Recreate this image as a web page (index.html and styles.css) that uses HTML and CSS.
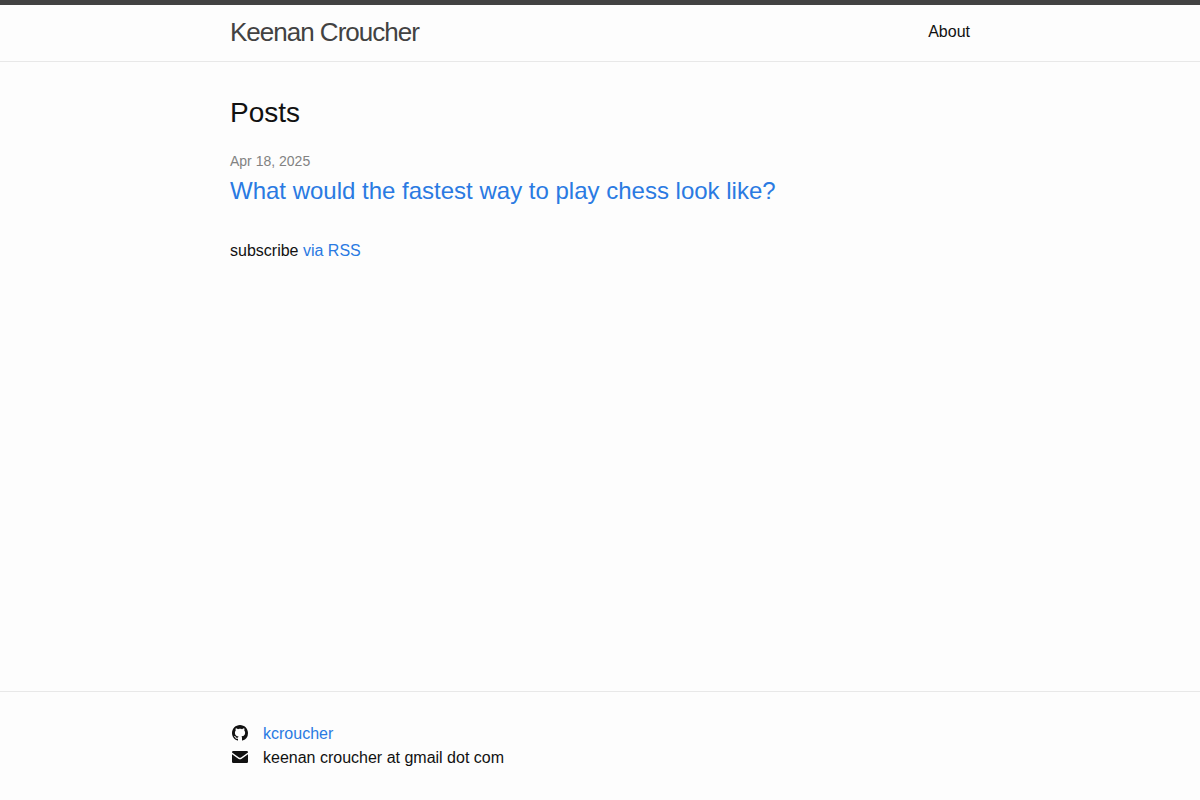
FILE: index.html
```html
<!DOCTYPE html>
<html lang="en">
<head>
    <meta charset="UTF-8">
    <meta name="viewport" content="width=device-width, initial-scale=1.0">
    <title>Keenan Croucher</title>
    <link rel="stylesheet" href="styles.css">
</head>
<body>
    <header class="site-header">
        <div class="wrapper header-row">
            <a class="site-title" href="/">Keenan Croucher</a>
            <nav class="site-nav">
                <a class="page-link" href="/about/">About</a>
            </nav>
        </div>
    </header>

    <main class="page-content">
        <div class="wrapper">
            <h2 class="post-list-heading">Posts</h2>
            <ul class="post-list">
                <li>
                    <span class="post-meta">Apr 18, 2025</span>
                    <h3 class="post-title">
                        <a class="post-link" href="#">What would the fastest way to play chess look like?</a>
                    </h3>
                </li>
            </ul>
            <p class="rss-subscribe">subscribe <a href="/feed.xml">via RSS</a></p>
        </div>
    </main>

    <footer class="site-footer">
        <div class="wrapper">
            <ul class="contact-list">
                <li>
                    <svg class="icon" viewBox="0 0 16 16" aria-hidden="true">
                        <path d="M8 0C3.58 0 0 3.58 0 8c0 3.54 2.29 6.53 5.47 7.59.4.07.55-.17.55-.38 0-.19-.01-.82-.01-1.49-2.01.37-2.53-.49-2.69-.94-.09-.23-.48-.94-.82-1.13-.28-.15-.68-.52-.01-.53.63-.01 1.08.58 1.23.82.72 1.21 1.87.87 2.33.66.07-.52.28-.87.51-1.07-1.78-.2-3.64-.89-3.64-3.95 0-.87.31-1.59.82-2.15-.08-.2-.36-1.02.08-2.12 0 0 .67-.21 2.2.82.64-.18 1.32-.27 2-.27s1.36.09 2 .27c1.53-1.04 2.2-.82 2.2-.82.44 1.1.16 1.92.08 2.12.51.56.82 1.27.82 2.15 0 3.07-1.87 3.75-3.65 3.95.29.25.54.73.54 1.48 0 1.07-.01 1.93-.01 2.2 0 .21.15.46.55.38A8.01 8.01 0 0 0 16 8c0-4.42-3.58-8-8-8z"/>
                    </svg>
                    <a href="#">kcroucher</a>
                </li>
                <li>
                    <svg class="icon" viewBox="0 0 16 16" aria-hidden="true">
                        <path d="M1.300 2h13.400Q16 2 16 3.300v.3L9 8.500q-1 .7-2 0L0 3.600v-.3Q0 2 1.300 2zM0 5.300l6.700 4.600q1.300.9 2.600 0L16 5.300v7.400q0 1.300-1.300 1.300H1.300Q0 14 0 12.700z"/>
                    </svg>
                    <span>keenan croucher at gmail dot com</span>
                </li>
            </ul>
        </div>
    </footer>
</body>
</html>
```
FILE: styles.css
```css
* {
    box-sizing: border-box;
}

body {
    margin: 0;
    min-height: 100vh;
    display: flex;
    flex-direction: column;
    background-color: #fdfdfd;
    color: #111;
    font: 16px/24px "Liberation Sans", Arial, sans-serif;
}

a {
    color: #2a7ae2;
    text-decoration: none;
}

a:hover {
    text-decoration: underline;
}

ul {
    list-style: none;
    margin: 0;
    padding: 0;
}

.wrapper {
    width: 100%;
    max-width: 800px;
    margin: 0 auto;
    padding: 0 30px;
}

/* Header */
.site-header {
    border-top: 5px solid #424242;
    border-bottom: 1px solid #e8e8e8;
}

.header-row {
    display: flex;
    justify-content: space-between;
    line-height: 54px;
    height: 56px;
}

.site-title {
    color: #424242;
    font-size: 26px;
    letter-spacing: -1px;
}

.page-link {
    color: #111;
}

/* Posts */
.page-content {
    flex: 1;
    padding: 30px 0;
}

.post-list-heading {
    margin: 0 0 15px;
    font-size: 28px;
    font-weight: 400;
    line-height: 42px;
}

.post-list li {
    margin-bottom: 30px;
}

.post-meta {
    color: #828282;
    font-size: 14px;
}

.post-title {
    margin: 0;
    font-size: 24px;
    font-weight: 400;
    line-height: 36px;
}

.post-link {
    display: block;
}

.rss-subscribe {
    margin: 0;
}

/* Footer */
.site-footer {
    border-top: 1px solid #e8e8e8;
    padding: 30px 0;
}

.contact-list li {
    display: flex;
    align-items: center;
    gap: 15px;
    padding-left: 2px;
}

.icon {
    width: 16px;
    height: 16px;
    margin-bottom: 2px;
    fill: #111;
}
```
